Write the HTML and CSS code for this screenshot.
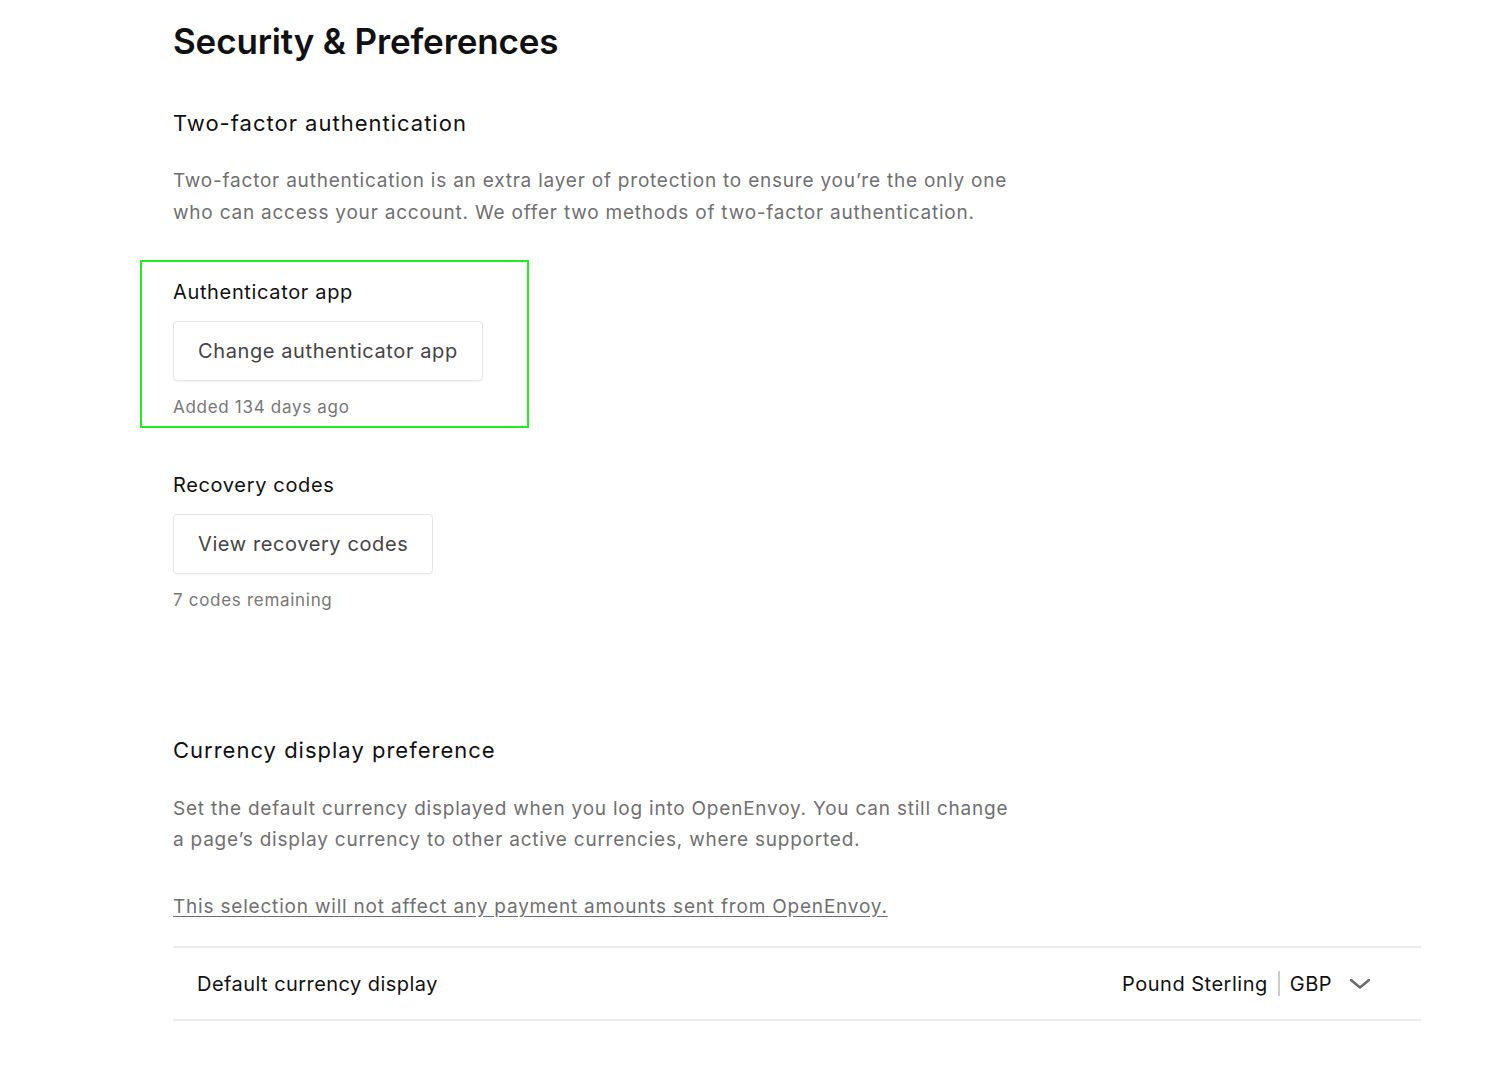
FILE: index.html
```html
<!DOCTYPE html>
<html lang="en">
<head>
<meta charset="utf-8">
<title>Security &amp; Preferences</title>
<link rel="stylesheet" href="styles.css">
</head>
<body>
<main class="page">
  <h1 class="title">Security &amp; Preferences</h1>

  <section class="section">
    <h2 class="section-title">Two-factor authentication</h2>
    <p class="desc">Two-factor authentication is an extra layer of protection to ensure you’re the only one who can access your account. We offer two methods of two-factor authentication.</p>

    <div class="method method-highlight">
      <h3 class="method-title">Authenticator app</h3>
      <button class="btn" type="button">Change authenticator app</button>
      <p class="meta">Added 134 days ago</p>
    </div>

    <div class="method method-recovery">
      <h3 class="method-title">Recovery codes</h3>
      <button class="btn" type="button">View recovery codes</button>
      <p class="meta">7 codes remaining</p>
    </div>
  </section>

  <section class="section section-currency">
    <h2 class="section-title">Currency display preference</h2>
    <p class="desc desc-currency">Set the default currency displayed when you log into OpenEnvoy. You can still change a page’s display currency to other active currencies, where supported.</p>
    <p class="note"><a href="#" class="note-link">This selection will not affect any payment amounts sent from OpenEnvoy.</a></p>

    <div class="setting-row">
      <span class="setting-label">Default currency display</span>
      <div class="setting-value">
        <span class="currency-name">Pound Sterling</span>
        <span class="divider"></span>
        <span class="currency-code">GBP</span>
        <svg class="chevron" width="22" height="12" viewBox="0 0 22 12" aria-hidden="true">
          <path d="M2 2 L11 9.5 L20 2" fill="none" stroke="#6a6a6a" stroke-width="2.4" stroke-linecap="round" stroke-linejoin="round"/>
        </svg>
      </div>
    </div>
  </section>
</main>
</body>
</html>
```

FILE: styles.css
```css
* {
  box-sizing: border-box;
}

html, body {
  margin: 0;
  padding: 0;
  background: #ffffff;
}

body {
  font-family: Inter, "Noto Sans", "Liberation Sans", sans-serif;
  color: #111111;
}

.page {
  padding: 19px 65px 40px 173px;
}

.title {
  margin: 0;
  font-size: 35px;
  line-height: 44px;
  font-weight: 600;
  letter-spacing: -0.15px;
  color: #111111;
}

.section-title {
  margin: 45px 0 0;
  font-size: 22px;
  line-height: 30px;
  font-weight: 400;
  letter-spacing: 1px;
  color: #111111;
}

.desc {
  margin: 27px 0 0;
  max-width: 845px;
  font-size: 19px;
  line-height: 32px;
  letter-spacing: 0.78px;
  color: #707070;
}

.method-highlight {
  width: 389px;
  margin: 31px 0 0 -33px;
  padding: 16px 20px 7px 31px;
  border: 2px solid #1ef01e;
}

.method-title {
  margin: 0;
  font-size: 20px;
  line-height: 28px;
  font-weight: 400;
  letter-spacing: 0.65px;
  color: #111111;
}

.btn {
  display: inline-block;
  margin-top: 15px;
  height: 60px;
  padding: 0 24px;
  font-family: inherit;
  font-size: 20px;
  letter-spacing: 0.6px;
  color: #444444;
  background: #ffffff;
  border: 1px solid #e6e6e6;
  border-radius: 4px;
  box-shadow: 0 1px 2px rgba(0, 0, 0, 0.05);
  cursor: pointer;
}

.meta {
  margin: 14px 0 0;
  font-size: 17px;
  line-height: 24px;
  letter-spacing: 0.7px;
  color: #777777;
}

.method-recovery {
  margin-top: 43px;
}

.section-currency .section-title {
  margin-top: 123px;
}

.desc-currency {
  line-height: 31px;
  margin-top: 28px;
}

.note {
  margin: 36px 0 0;
  font-size: 19px;
  line-height: 31px;
  letter-spacing: 0.8px;
}

.note-link {
  color: #707070;
  text-decoration: underline;
  text-underline-offset: 3px;
}

.setting-row {
  margin-top: 24px;
  display: flex;
  align-items: center;
  justify-content: space-between;
  height: 75px;
  padding: 0 50px 0 24px;
  border-top: 2px solid #ececec;
  border-bottom: 2px solid #ececec;
}

.setting-label {
  font-size: 20px;
  letter-spacing: 0.45px;
  color: #111111;
}

.setting-value {
  display: flex;
  align-items: center;
  font-size: 20px;
  letter-spacing: 0.5px;
  color: #111111;
}

.divider {
  width: 2px;
  height: 25px;
  background: #cccccc;
  margin: 0 10px;
}

.chevron {
  margin-left: 17px;
}
```
